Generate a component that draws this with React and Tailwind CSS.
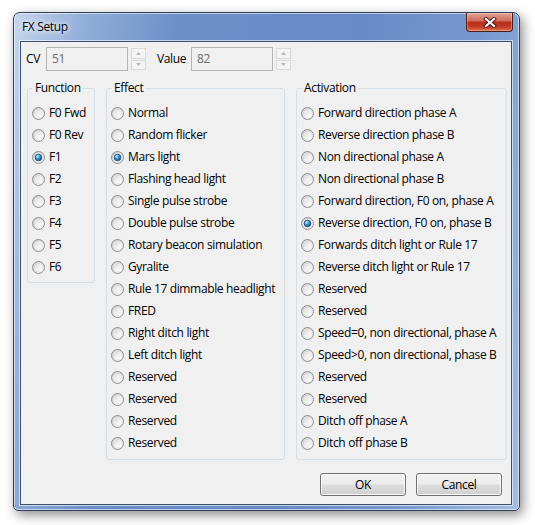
import React from 'react';

const functions = ['F0 Fwd', 'F0 Rev', 'F1', 'F2', 'F3', 'F4', 'F5', 'F6'];

const effects = [
  'Normal',
  'Random flicker',
  'Mars light',
  'Flashing head light',
  'Single pulse strobe',
  'Double pulse strobe',
  'Rotary beacon simulation',
  'Gyralite',
  'Rule 17 dimmable headlight',
  'FRED',
  'Right ditch light',
  'Left ditch light',
  'Reserved',
  'Reserved',
  'Reserved',
  'Reserved',
];

const activations = [
  'Forward direction phase A',
  'Reverse direction phase B',
  'Non directional phase A',
  'Non directional phase B',
  'Forward direction, F0 on, phase A',
  'Reverse direction, F0 on, phase B',
  'Forwards ditch light or Rule 17',
  'Reverse ditch light or Rule 17',
  'Reserved',
  'Reserved',
  'Speed=0, non directional, phase A',
  'Speed>0, non directional, phase B',
  'Reserved',
  'Reserved',
  'Ditch off phase A',
  'Ditch off phase B',
];

function Radio({ checked }) {
  return (
    <svg width="13" height="13" viewBox="0 0 13 13" className="shrink-0">
      <defs>
        <linearGradient id="rOuter" x1="0" y1="0" x2="1" y2="1">
          <stop offset="0" stopColor="#c9c9c9" />
          <stop offset="1" stopColor="#fbfbfb" />
        </linearGradient>
        <linearGradient id="rInner" x1="0" y1="0" x2="1" y2="1">
          <stop offset="0" stopColor="#dedede" />
          <stop offset="1" stopColor="#ffffff" />
        </linearGradient>
        <radialGradient id="rDot" cx="0.35" cy="0.3" r="0.8">
          <stop offset="0" stopColor="#c4ecff" />
          <stop offset="0.45" stopColor="#3a9ae0" />
          <stop offset="1" stopColor="#0c3f72" />
        </radialGradient>
      </defs>
      <circle cx="6.5" cy="6.5" r="6" fill="url(#rOuter)" stroke="#8c8e8f" />
      <circle cx="6.5" cy="6.5" r="4" fill="url(#rInner)" />
      {checked && <circle cx="6.5" cy="6.5" r="3.3" fill="url(#rDot)" stroke="#1d4466" strokeWidth="0.8" />}
    </svg>
  );
}

function Spin() {
  return (
    <div className="ml-[3px] flex h-[22px] w-[15px] flex-col gap-px">
      <div className="flex flex-1 items-center justify-center border border-[#d9d9d9] bg-[#f4f4f4]">
        <svg width="5" height="3" viewBox="0 0 5 3">
          <path d="M0 3 L2.5 0 L5 3 Z" fill="#b9b9b9" />
        </svg>
      </div>
      <div className="flex flex-1 items-center justify-center border border-[#d9d9d9] bg-[#f4f4f4]">
        <svg width="5" height="3" viewBox="0 0 5 3">
          <path d="M0 0 L2.5 3 L5 0 Z" fill="#b9b9b9" />
        </svg>
      </div>
    </div>
  );
}

function Group({ title, items, checked, width, pb }) {
  return (
    <fieldset className={`min-w-0 shrink-0 rounded-[3px] border border-[#d5dfe5] pl-[4px] pt-[6px] ${width} ${pb}`}>
      <legend className="ml-[1px] px-[2px] leading-[16px]">{title}</legend>
      {items.map((label, i) => (
        <div key={i} className="flex h-[22px] items-center gap-[4px] whitespace-nowrap">
          <Radio checked={i === checked} />
          <span>{label}</span>
        </div>
      ))}
    </fieldset>
  );
}

function Button({ children }) {
  return (
    <button className="flex h-[23px] w-[86px] items-center justify-center rounded-[3px] border border-[#707070] bg-[linear-gradient(#f2f2f2_0%,#ebebeb_48%,#dddddd_52%,#cfcfcf_100%)] shadow-[inset_0_0_0_1px_#fbfbfb] text-black">
      {children}
    </button>
  );
}

export default function App() {
  return (
    <div className="h-[525px] w-[535px] overflow-hidden bg-white pl-[13px] pt-[12px] font-['Open_Sans',sans-serif] text-[12px] tracking-[-0.35px] text-black">
      <div className="flex h-[499px] w-[507px] flex-col rounded-t-[7px] rounded-b-[5px] border border-[#2f4259] bg-[linear-gradient(100deg,#c6d6ec_0%,#92aed9_12%,#6b90c8_28%,#678cc5_60%,#7899cf_80%,#a3bce2_100%)] shadow-[inset_0_0_0_1px_rgba(255,255,255,0.55),3px_4px_12px_rgba(0,0,0,0.45)]">
        {/* Title bar */}
        <div className="flex h-[28px] shrink-0 justify-between pl-[8px] pr-[6px]">
          <span className="self-center [text-shadow:0_0_8px_#fff,0_0_4px_#fff]">FX Setup</span>
          <div className="flex h-[19px] w-[47px] items-center justify-center rounded-b-[4px] border border-t-0 border-[#4f1d17] bg-[linear-gradient(#e2a294_0%,#cf6f60_42%,#b62f1c_52%,#c23a24_75%,#e0714f_100%)] shadow-[inset_0_0_0_1px_rgba(255,255,255,0.3)]">
            <svg width="14" height="11" viewBox="0 0 14 11">
              <path d="M3 2 L11 9 M11 2 L3 9" stroke="#3f1510" strokeWidth="4" strokeLinecap="square" />
              <path d="M3 2 L11 9 M11 2 L3 9" stroke="#ffffff" strokeWidth="2.2" strokeLinecap="square" />
            </svg>
          </div>
        </div>

        {/* Client area */}
        <div className="mb-[5px] ml-[6px] mr-[7px] flex flex-1 flex-col border border-[#3b5070] bg-[#f0f0f0] shadow-[0_0_0_1px_rgba(255,255,255,0.6)]">
          <div className="mt-[5px] flex h-[24px] items-center pl-[5px]">
            <span className="w-[20px]">CV</span>
            <div className="flex h-[24px] w-[82px] items-center border border-[#b4b4b4] pl-[5px] text-[#6d6d6d]">51</div>
            <Spin />
            <span className="ml-[11px] w-[34px]">Value</span>
            <div className="flex h-[24px] w-[82px] items-center border border-[#b4b4b4] pl-[5px] text-[#6d6d6d]">82</div>
            <Spin />
          </div>

          <div className="mt-[9px] flex items-start gap-[11px] pl-[6px]">
            <Group title="Function" items={functions} checked={2} width="w-[68px]" pb="pb-[4px]" />
            <Group title="Effect" items={effects} checked={2} width="w-[179px]" pb="pb-[5px]" />
            <Group title="Activation" items={activations} checked={5} width="w-[211px]" pb="pb-[5px]" />
          </div>

          <div className="mt-[13px] flex justify-end gap-[10px] pr-[9px]">
            <Button>OK</Button>
            <Button>Cancel</Button>
          </div>
        </div>
      </div>
    </div>
  );
}
